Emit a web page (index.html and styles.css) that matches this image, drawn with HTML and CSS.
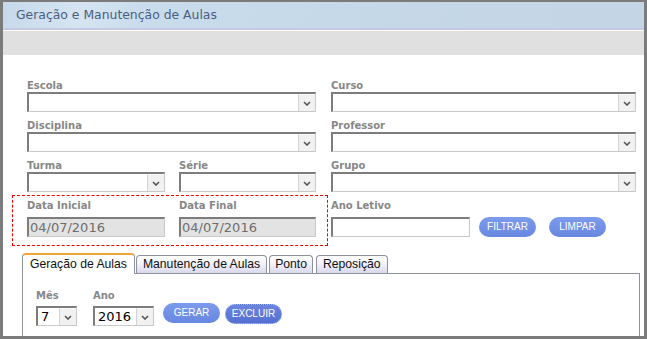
FILE: index.html
```html
<!DOCTYPE html>
<html lang="pt">
<head>
<meta charset="utf-8">
<title>Geração e Manutenção de Aulas</title>
<link rel="stylesheet" href="styles.css">
</head>
<body>
<div class="frame">
  <div class="inner">
    <div class="header">Geração e Manutenção de Aulas</div>
    <div class="band"></div>
    <div class="form">
      <div class="row">
        <div class="field"><div class="lbl">Escola</div><div class="sel"><span class="val"></span><span class="arr"><svg width="8" height="5" viewBox="0 0 8 5"><polyline points="1,1 4,4 7,1" fill="none" stroke="#555" stroke-width="1.6"/></svg></span></div></div>
        <div class="field"><div class="lbl">Curso</div><div class="sel"><span class="val"></span><span class="arr"><svg width="8" height="5" viewBox="0 0 8 5"><polyline points="1,1 4,4 7,1" fill="none" stroke="#555" stroke-width="1.6"/></svg></span></div></div>
      </div>
      <div class="row">
        <div class="field"><div class="lbl">Disciplina</div><div class="sel"><span class="val"></span><span class="arr"><svg width="8" height="5" viewBox="0 0 8 5"><polyline points="1,1 4,4 7,1" fill="none" stroke="#555" stroke-width="1.6"/></svg></span></div></div>
        <div class="field"><div class="lbl">Professor</div><div class="sel"><span class="val"></span><span class="arr"><svg width="8" height="5" viewBox="0 0 8 5"><polyline points="1,1 4,4 7,1" fill="none" stroke="#555" stroke-width="1.6"/></svg></span></div></div>
      </div>
      <div class="row">
        <div class="split">
          <div class="field w138"><div class="lbl">Turma</div><div class="sel"><span class="val"></span><span class="arr"><svg width="8" height="5" viewBox="0 0 8 5"><polyline points="1,1 4,4 7,1" fill="none" stroke="#555" stroke-width="1.6"/></svg></span></div></div>
          <div class="field w137"><div class="lbl">Série</div><div class="sel"><span class="val"></span><span class="arr"><svg width="8" height="5" viewBox="0 0 8 5"><polyline points="1,1 4,4 7,1" fill="none" stroke="#555" stroke-width="1.6"/></svg></span></div></div>
        </div>
        <div class="field"><div class="lbl">Grupo</div><div class="sel"><span class="val"></span><span class="arr"><svg width="8" height="5" viewBox="0 0 8 5"><polyline points="1,1 4,4 7,1" fill="none" stroke="#555" stroke-width="1.6"/></svg></span></div></div>
      </div>
      <div class="row4">
        <div class="dashed">
          <div class="field w138"><div class="lbl lbl2">Data Inicial</div><div class="inp dis">04/07/2016</div></div>
          <div class="field w137"><div class="lbl lbl2">Data Final</div><div class="inp dis">04/07/2016</div></div>
        </div>
        <div class="ano">
          <div class="field w139"><div class="lbl lbl2">Ano Letivo</div><div class="inp"></div></div>
          <div class="btns">
            <span class="btn">FILTRAR</span>
            <span class="btn b2">LIMPAR</span>
          </div>
        </div>
      </div>
    </div>
    <div class="tabs">
      <div class="tab active">Geração de Aulas</div>
      <div class="tab">Manutenção de Aulas</div>
      <div class="tab">Ponto</div>
      <div class="tab">Reposição</div>
    </div>
    <div class="panel">
      <div class="prow">
        <div class="field"><div class="lbl">Mês</div><div class="sel small w41"><span class="val">7</span><span class="arr"><svg width="8" height="5" viewBox="0 0 8 5"><polyline points="1,1 4,4 7,1" fill="none" stroke="#555" stroke-width="1.6"/></svg></span></div></div>
        <div class="field"><div class="lbl">Ano</div><div class="sel small w61"><span class="val">2016</span><span class="arr"><svg width="8" height="5" viewBox="0 0 8 5"><polyline points="1,1 4,4 7,1" fill="none" stroke="#555" stroke-width="1.6"/></svg></span></div></div>
        <span class="btn g">GERAR</span>
        <span class="btn x">EXCLUIR</span>
      </div>
    </div>
  </div>
</div>
</body>
</html>
```
FILE: styles.css
```css
* { box-sizing: border-box; }
html, body { margin: 0; padding: 0; background: #fff; }
body { font-family: "DejaVu Sans", Verdana, sans-serif; }
.frame {
  width: 647px; height: 339px;
  border-style: solid; border-color: #7b7b7b;
  border-width: 2px 3px 3px 3px;
  overflow: hidden;
}
.inner { height: 100%; overflow: hidden; }
.header {
  height: 28px;
  border-bottom: 2px solid #c6c9e6;
  background: linear-gradient(100deg, #c6d9ea 0%, #d6e4f1 12%, #c9dcec 22%, #c5d8e8 60%, #c4d6e6 100%);
  color: #4b5e80;
  font-size: 12.4px;
  line-height: 26px;
  padding-left: 13px;
}
.band {
  height: 25px;
  border-top: 1px solid #fff;
  background: #e0e0e0;
}
.form { padding: 25px 0 0 24px; }
.row {
  display: grid;
  grid-template-columns: 289px 305px;
  column-gap: 15px;
  margin-bottom: 8px;
}
.row:nth-child(3) { margin-bottom: 3px; }
.split { display: flex; gap: 14px; }
.field { display: flex; flex-direction: column; }
.w138 { width: 138px; }
.w137 { width: 137px; }
.w139 { width: 139px; }
.lbl {
  font-size: 10px; font-weight: bold; color: #878787;
  line-height: 12px; height: 12px;
}
.lbl2 { margin-bottom: 5px; }
.sel {
  height: 20px;
  display: flex; align-items: stretch;
  background: #fff;
  border-top: 2px solid #7d7d7d; border-left: 2px solid #7d7d7d;
  border-right: 1px solid #c9c9c9; border-bottom: 1px solid #c9c9c9;
}
.val { flex: 1; font-size: 12.5px; line-height: 17px; padding-left: 2px; color: #111; }
.arr {
  width: 17px;
  background: #f1f1f1;
  border-left: 1px solid #d2d2d2;
  border-top: 1px solid #fafafa;
  display: flex; align-items: center; justify-content: center;
}
.arr svg { display: block; }
.inp {
  height: 20px;
  background: #fff;
  border-top: 2px solid #7d7d7d; border-left: 2px solid #7d7d7d;
  border-right: 1px solid #c9c9c9; border-bottom: 1px solid #c9c9c9;
  font-size: 13px; line-height: 17px; padding-left: 1px;
  color: #6e6e6e;
}
.inp.dis { background: #e3e3e3; }
.row4 { display: flex; }
.dashed {
  margin-left: -15px;
  width: 316px; height: 51px;
  border: 1px dashed #ee0000;
  padding: 4px 0 0 14px;
  display: flex; gap: 14px;
}
.ano { display: flex; margin-left: 3px; padding-top: 5px; }
.btns { display: flex; gap: 13px; margin-left: 9px; padding-top: 17px; }
.btn {
  display: inline-flex; align-items: center; justify-content: center;
  width: 57px; height: 20px;
  border-radius: 10px;
  background: linear-gradient(#7d9bec, #6787e0);
  color: #fff;
  font-family: "Liberation Sans", Arial, sans-serif;
  font-size: 10px;
  padding-bottom: 1px;
}
.tabs {
  display: flex; align-items: flex-end; gap: 1px;
  padding-left: 19px;
  margin-top: 7px;
  height: 20px;
  position: relative; z-index: 1;
}
.tab {
  height: 18px;
  border: 1px solid #8e929c; border-bottom: none;
  border-radius: 4px 4px 0 0;
  background: linear-gradient(#ffffff, #f2f2f9 45%, #d9d9ee);
  font-family: "Liberation Sans", Arial, sans-serif;
  font-size: 12.2px; line-height: 17px;
  color: #111;
  padding: 0 6px;
}
.tab.active {
  height: 21px;
  border-top: 2px solid #f0a435;
  background: #fff;
  margin-bottom: -1px;
  line-height: 18px;
  padding: 0 7px;
}
.tab:nth-child(3) { margin-left: 1px; padding: 0 5px; }
.tab:nth-child(4) { margin-left: 2px; padding: 0 6px; }
.panel {
  width: 618px; height: 80px;
  margin-left: 19px;
  border: 1px solid #8e929c;
  padding: 16px 0 0 13px;
}
.prow { display: flex; align-items: flex-end; }
.prow .field { margin-right: 16px; }
.prow .field + .field { margin-right: 9px; }
.prow .lbl { margin-bottom: 4px; }
.w41 { width: 41px; }
.w61 { width: 61px; }
.small .val { font-size: 13px; color: #000; padding-left: 3px; }
.small .arr { width: 17px; }
.btn.g { margin-bottom: 3px; width: 57px; }
.btn.x {
  margin-left: 5px; margin-bottom: 2px; width: 57px;
  background: linear-gradient(#6a84de, #5670d2);
  border: 1px dotted #a9b9f2;
}
```
